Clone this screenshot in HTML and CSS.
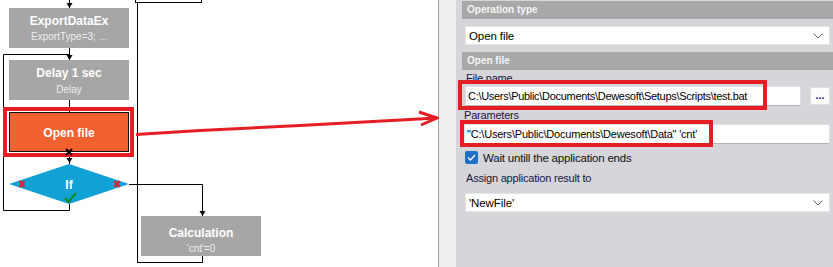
FILE: index.html
```html
<!DOCTYPE html>
<html lang="en">
<head>
  <meta charset="UTF-8" />
  <title>Sequencer - Open file</title>
  <link rel="stylesheet" href="styles.css">
</head>
<body>
  <div class="app">

    <div class="canvas">
      <svg class="flow" width="438" height="267" viewBox="0 0 438 267">
        <!-- connectors -->
        <g class="wire">
          <rect x="135.5" y="-6.5" width="66" height="9" fill="none" />
          <polyline points="69.5,0 69.5,8" />
          <polyline points="69.5,54.5 3.5,54.5 3.5,210.5 69.5,210.5 69.5,204" />
          <polyline points="69.5,48 69.5,60" />
          <polyline points="69.5,100 69.5,112" />
          <polyline points="69.5,152 69.5,164" />
          <polyline points="129,184.5 202.5,184.5 202.5,216" />
          <polyline points="202.5,256 202.5,262.5 137.5,262.5 137.5,2" />
        </g>
        <g class="tips">
          <polygon points="66.5,3 72.5,3 69.5,8" />
          <polygon points="66.5,55 72.5,55 69.5,60" />
          <polygon points="66.5,158 72.5,158 69.5,163" />
          <polygon points="199.5,211 205.5,211 202.5,216" />
        </g>

        <!-- blocks -->
        <rect class="block" x="9" y="8" width="120" height="40" />
        <text class="title" x="69" y="25">ExportDataEx</text>
        <text class="sub" x="69" y="40">ExportType=3; ...</text>

        <rect class="block" x="9" y="60" width="120" height="40" />
        <text class="title" x="69" y="77">Delay 1 sec</text>
        <text class="sub" x="69" y="93">Delay</text>

        <rect class="block active" x="9.5" y="112.5" width="119" height="39" />
        <text class="title" x="69" y="137">Open file</text>
        <rect class="focus" x="5" y="109" width="127" height="46" />
        <path class="cross" d="M66 149 L72 155 M72 149 L66 155" />

        <polygon class="decision" points="9,184 69,164 129,184 69,204" />
        <text class="title" x="69" y="189">If</text>
        <path class="no" d="M19.5 181 L24.5 187 M24.5 181 L19.5 187" />
        <path class="no" d="M114.5 181 L119.5 187 M119.5 181 L114.5 187" />
        <path class="yes" d="M65 198 L68.5 202 L76 193" />

        <rect class="block" x="141" y="216" width="120" height="40" />
        <text class="title" x="201" y="237">Calculation</text>
        <text class="sub" x="201" y="252">'cnt'=0</text>

        <!-- callout -->
        <path class="callout" d="M136 134.5 L200 130.5 L300 125.5 L437 118" />
        <path class="callout" d="M419 112 L437 118 L421 125" />
      </svg>
    </div>

    <div class="gutter"></div>

    <div class="panel">
      <div class="section-head">Operation type</div>
      <div class="select">
        <span>Open file</span>
        <svg class="chevron" width="10" height="6" viewBox="0 0 10 6"><polyline points="0.5,0.5 5,5 9.5,0.5" /></svg>
      </div>

      <div class="section-head">Open file</div>
      <div class="field-label">File name</div>
      <div class="file-row">
        <div class="input file-input">C:\Users\Public\Documents\Dewesoft\Setups\Scripts\test.bat</div>
        <div class="browse">...</div>
        <span class="mark mark-file"></span>
      </div>

      <div class="field-label params-label">Parameters</div>
      <div class="param-row">
        <div class="input">"C:\Users\Public\Documents\Dewesoft\Data" 'cnt'</div>
        <span class="mark mark-param"></span>
      </div>

      <div class="check-row">
        <span class="checkbox">
          <svg width="9" height="7" viewBox="0 0 9 7"><polyline points="1,3.5 3.5,6 8,1" /></svg>
        </span>
        <span>Wait untill the application ends</span>
      </div>

      <div class="field-label assign-label">Assign application result to</div>
      <div class="select">
        <span>'NewFile'</span>
        <svg class="chevron" width="10" height="6" viewBox="0 0 10 6"><polyline points="0.5,0.5 5,5 9.5,0.5" /></svg>
      </div>
    </div>

  </div>
</body>
</html>
```

FILE: styles.css
```css
body {
  margin: 0;
  font-family: "Liberation Sans", Arial, sans-serif;
  font-size: 12px;
  background-color: #ffffff;
}

.app {
  display: flex;
  width: 833px;
  height: 267px;
  overflow: hidden;
}

/* flow chart */

.canvas {
  width: 438px;
  height: 267px;
  flex: none;
  background-color: #ffffff;
  border-right: 1px solid #a3a3a3;
}

.flow {
  display: block;
  overflow: visible;
}

.wire polyline,
.wire rect {
  fill: none;
  stroke: #000000;
  stroke-width: 1;
}

.tips polygon {
  fill: #000000;
}

.block {
  fill: #a6a6a6;
}

.block.active {
  fill: #f26230;
  stroke: #111111;
  stroke-width: 1;
}

.decision {
  fill: #10a2d3;
}

.title {
  font-family: "Liberation Sans", Arial, sans-serif;
  font-weight: bold;
  font-size: 12px;
  fill: #ffffff;
  text-anchor: middle;
}

.sub {
  font-family: "Liberation Sans", Arial, sans-serif;
  font-size: 10px;
  fill: #ececec;
  text-anchor: middle;
}

.focus {
  fill: none;
  stroke: #e51d25;
  stroke-width: 4;
}

.cross {
  stroke: #000000;
  stroke-width: 2;
}

.no {
  stroke: #ee1c25;
  stroke-width: 2;
}

.yes {
  fill: none;
  stroke: #138a1e;
  stroke-width: 2;
}

.callout {
  fill: none;
  stroke: #e51d25;
  stroke-width: 3;
}

/* side panel */

.gutter {
  width: 17px;
  flex: none;
  background-color: #efefef;
}

.panel {
  flex: 1;
  background-color: #d6d5d9;
  padding: 1px 0 0 6px;
  color: #000000;
  font-size: 11px;
  letter-spacing: -0.2px;
}

.section-head {
  height: 18px;
  line-height: 18px;
  padding-left: 5px;
  background-color: #a8a8a8;
  color: #f4f4f4;
  font-size: 10px;
  font-weight: bold;
  letter-spacing: 0;
}

.select {
  display: flex;
  align-items: center;
  justify-content: space-between;
  height: 19px;
  margin: 7px 3px 7px 3px;
  padding: 0 6px 0 3px;
  background-color: #ffffff;
  border: 1px solid #e4e4e4;
  box-sizing: border-box;
  font-size: 11.5px;
  letter-spacing: -0.1px;
}

.chevron polyline {
  fill: none;
  stroke: #606060;
  stroke-width: 1;
}

.field-label {
  height: 16px;
  line-height: 16px;
  padding-left: 4px;
  color: #161640;
}

.params-label {
  height: 18px;
  line-height: 18px;
  padding-left: 2px;
}

.assign-label {
  height: 22px;
  line-height: 14px;
  padding-top: 7px;
  box-sizing: border-box;
}

.file-row,
.param-row {
  position: relative;
  display: flex;
  align-items: center;
  height: 20px;
  margin: 0 3px;
  gap: 9px;
}

.input {
  flex: 1;
  height: 20px;
  line-height: 19px;
  padding-left: 2px;
  background-color: #ffffff;
  border: 1px solid #e2e2e2;
  border-bottom-color: #b4b4b4;
  box-sizing: border-box;
  white-space: nowrap;
  overflow: hidden;
}

.file-input {
  letter-spacing: -0.3px;
}

.param-row .input {
  margin-left: -1px;
}

.browse {
  width: 20px;
  height: 18px;
  line-height: 14px;
  text-align: center;
  background-color: #fbfbfb;
  border: 1px solid #e2e2e2;
  border-radius: 3px;
  box-sizing: border-box;
  color: #1a1a6a;
  font-weight: bold;
  font-size: 11px;
  letter-spacing: 0;
}

.mark {
  position: absolute;
  border: 4px solid #e51d25;
}

.mark-file {
  left: -7px;
  top: -6px;
  width: 301px;
  height: 22px;
}

.mark-param {
  left: -5px;
  top: -4px;
  width: 245px;
  height: 19px;
}

.check-row {
  display: flex;
  align-items: center;
  gap: 5px;
  height: 13px;
  margin: 7px 3px 0 3px;
  color: #111111;
  font-size: 11.5px;
}

.checkbox {
  display: flex;
  align-items: center;
  justify-content: center;
  width: 13px;
  height: 13px;
  border-radius: 2px;
  background-color: #1f6fc5;
}

.checkbox polyline {
  fill: none;
  stroke: #ffffff;
  stroke-width: 1.3;
}
```
